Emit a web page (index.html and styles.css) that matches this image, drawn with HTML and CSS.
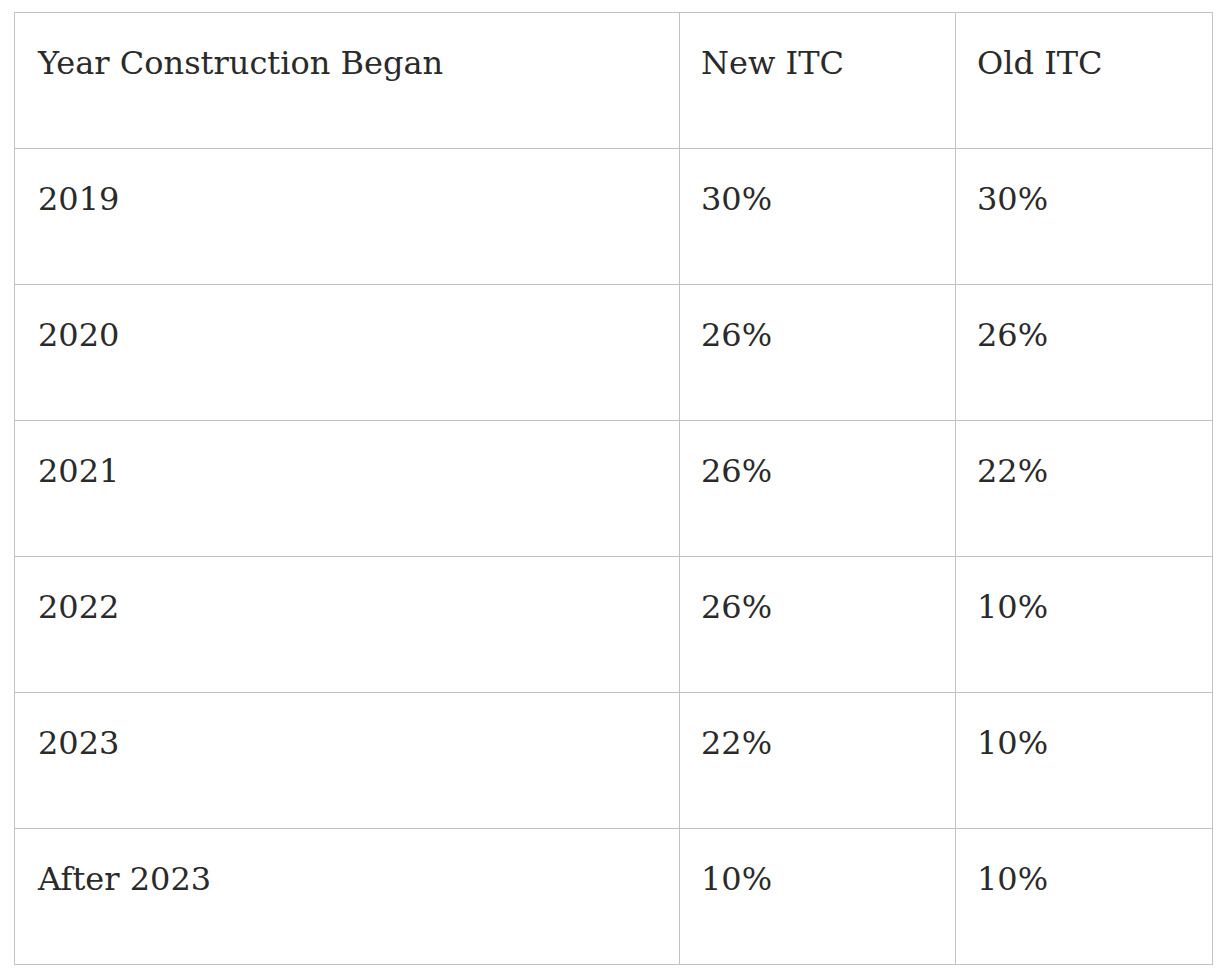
FILE: index.html
```html
<!DOCTYPE html>
<html lang="en">
<head>
<meta charset="utf-8">
<title>ITC Schedule</title>
<link rel="stylesheet" href="styles.css">
</head>
<body>
<div class="page">
  <table class="itc">
    <colgroup>
      <col class="c-year">
      <col class="c-new">
      <col class="c-old">
    </colgroup>
    <thead>
      <tr><th>Year Construction Began</th><th>New ITC</th><th>Old ITC</th></tr>
    </thead>
    <tbody>
      <tr><td>2019</td><td>30%</td><td>30%</td></tr>
      <tr><td>2020</td><td>26%</td><td>26%</td></tr>
      <tr><td>2021</td><td>26%</td><td>22%</td></tr>
      <tr><td>2022</td><td>26%</td><td>10%</td></tr>
      <tr><td>2023</td><td>22%</td><td>10%</td></tr>
      <tr><td>After 2023</td><td>10%</td><td>10%</td></tr>
    </tbody>
  </table>
</div>
</body>
</html>
```

FILE: styles.css
```css
html, body {
  margin: 0;
  padding: 0;
  background: #ffffff;
}

.page {
  padding: 12px 12px 0 14px;
}

.itc {
  width: 1198px;
  table-layout: fixed;
  border-collapse: collapse;
  font-family: "DejaVu Serif", "Liberation Serif", serif;
  font-size: 32px;
  color: #2a2a2a;
}

.c-year { width: 665px; }
.c-new { width: 276px; }
.c-old { width: 257px; }

.itc th,
.itc td {
  border: 1px solid #c2c2c2;
  padding: 24px 22px 58px 23px;
  line-height: 53px;
  text-align: left;
  vertical-align: top;
  font-weight: normal;
}

.itc th + th,
.itc td + td {
  padding-left: 21px;
}
```
